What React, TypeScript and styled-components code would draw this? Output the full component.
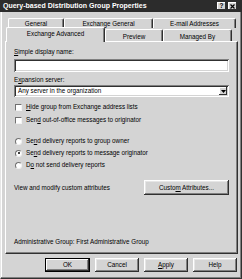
import React from 'react';
import styled, { createGlobalStyle, css } from 'styled-components';

const FACE = '#d4d4d4';

const Global = createGlobalStyle`
  html, body { margin: 0; padding: 0; background: ${FACE}; }
  body { font-family: "Liberation Sans", Arial, sans-serif; }
  * { box-sizing: border-box; }
`;

const raised = css`
  box-shadow: inset -1px -1px 0 #303030, inset 1px 1px 0 #ffffff,
    inset -2px -2px 0 #808080, inset 2px 2px 0 #e6e6e6;
`;
const sunken = css`
  box-shadow: inset 1px 1px 0 #808080, inset -1px -1px 0 #ffffff,
    inset 2px 2px 0 #303030, inset -2px -2px 0 ${FACE};
`;

const Window = styled.div`
  width: 242px;
  height: 279px;
  background: ${FACE};
  border-left: 1px solid #e6e6e6;
  border-right: 1px solid #303030;
  border-bottom: 1px solid #303030;
  box-shadow: inset -1px -1px 0 #808080, inset 1px 0 0 #ffffff;
  display: flex;
  flex-direction: column;
  font-size: 6.3px;
  line-height: 8px;
  color: #000;
`;

const TitleBar = styled.div`
  height: 12px;
  margin-left: -1px;
  margin-right: -1px;
  background: #2c2c2c;
  display: flex;
  align-items: center;
  padding: 0 5px 0 3px;
  color: #fff;
  font-weight: bold;
  font-size: 7px;
`;

const TitleText = styled.span`
  flex: 1;
  white-space: nowrap;
`;

const CaptionButtons = styled.div`
  display: flex;
  gap: 2px;
`;

const CaptionButton = styled.div`
  width: 9px;
  height: 8px;
  background: ${FACE};
  ${raised};
  box-shadow: inset -1px -1px 0 #303030, inset 1px 1px 0 #ffffff;
  color: #000;
  display: flex;
  align-items: center;
  justify-content: center;
  font-size: 6.5px;
  line-height: 8px;
  font-weight: bold;
`;

const Body = styled.div`
  flex: 1;
  display: flex;
  flex-direction: column;
  padding: 6px 3px 0 4px;
`;

const TabRow = styled.div<{ $indent: number; $front?: boolean }>`
  display: flex;
  padding-left: ${(p) => p.$indent}px;
  height: ${(p) => (p.$front ? 13 : 10)}px;
  position: relative;
  z-index: ${(p) => (p.$front ? 2 : 1)};
`;

const Tab = styled.div<{ $w: number; $selected?: boolean; $front?: boolean }>`
  width: ${(p) => p.$w}px;
  flex: none;
  background: ${FACE};
  border-top: 1px solid #ffffff;
  border-left: 1px solid #ffffff;
  border-right: 1px solid #303030;
  box-shadow: inset -1px 0 0 #808080;
  border-radius: 2px 2px 0 0;
  display: flex;
  justify-content: center;
  padding-top: ${(p) => (p.$front ? 3 : 1)}px;
  white-space: nowrap;
  ${(p) =>
    p.$front &&
    !p.$selected &&
    css`
      margin-top: 1px;
    `}
  ${(p) =>
    p.$selected &&
    css`
      margin-top: -1px;
      margin-bottom: -1px;
      padding-top: 2px;
      height: 15px;
      position: relative;
      z-index: 3;
    `}
`;

const Panel = styled.div`
  height: 213px;
  background: ${FACE};
  border-top: 1px solid #ffffff;
  border-left: 1px solid #ffffff;
  border-right: 1px solid #303030;
  border-bottom: 1px solid #303030;
  box-shadow: inset -1px -1px 0 #808080;
  display: flex;
  flex-direction: column;
  padding: 6px 8px 7px 8px;
  position: relative;
  z-index: 1;
`;

const Label = styled.div<{ $mt?: number }>`
  margin-top: ${(p) => p.$mt ?? 0}px;
  height: 8px;
  white-space: nowrap;
`;

const U = styled.span`
  text-decoration: underline;
  text-underline-offset: 1px;
`;

const TextInput = styled.div`
  margin-top: 3px;
  height: 13px;
  background: #fff;
  ${sunken};
`;

const Combo = styled.div`
  margin-top: 1px;
  height: 12px;
  background: #fff;
  ${sunken};
  display: flex;
  align-items: center;
  padding: 2px 2px 2px 4px;
`;

const ComboText = styled.span`
  flex: 1;
  white-space: nowrap;
`;

const DropButton = styled.div`
  width: 8px;
  height: 8px;
  background: ${FACE};
  ${raised};
  box-shadow: inset -1px -1px 0 #303030, inset 1px 1px 0 #ffffff;
  display: flex;
  align-items: center;
  justify-content: center;
`;

const OptionRow = styled.div<{ $mt: number }>`
  margin-top: ${(p) => p.$mt}px;
  height: 8px;
  display: flex;
  align-items: center;
  gap: 4px;
  padding-left: 1px;
  white-space: nowrap;
`;

const CheckBox = styled.div`
  width: 7px;
  height: 7px;
  flex: none;
  background: #fff;
  border-top: 1px solid #707070;
  border-left: 1px solid #707070;
  border-right: 1px solid #f4f4f4;
  border-bottom: 1px solid #f4f4f4;
`;

const Radio = styled.div<{ $on?: boolean }>`
  width: 7px;
  height: 7px;
  flex: none;
  border-radius: 50%;
  background: #fff;
  border: 1px solid;
  border-color: #707070 #f0f0f0 #f0f0f0 #707070;
  display: flex;
  align-items: center;
  justify-content: center;
  &::after {
    content: '';
    width: 2px;
    height: 2px;
    border-radius: 50%;
    background: ${(p) => (p.$on ? '#000' : 'transparent')};
  }
`;

const AttrRow = styled.div`
  margin-top: 11px;
  display: flex;
  align-items: center;
  justify-content: space-between;
  white-space: nowrap;
`;

const Button = styled.div<{ $w: number; $h: number; $default?: boolean }>`
  width: ${(p) => p.$w}px;
  height: ${(p) => p.$h}px;
  flex: none;
  background: ${FACE};
  ${raised};
  display: flex;
  align-items: center;
  justify-content: center;
  white-space: nowrap;
  ${(p) =>
    p.$default &&
    css`
      outline: 1px solid #000;
      outline-offset: -1px;
      box-shadow: inset -2px -2px 0 #303030, inset 2px 2px 0 #ffffff,
        inset -3px -3px 0 #808080;
    `}
`;

const Footer = styled.div`
  margin-top: auto;
  height: 8px;
  white-space: nowrap;
`;

const ButtonBar = styled.div`
  margin-top: 4px;
  display: flex;
  justify-content: flex-end;
  gap: 5px;
  padding-right: 1px;
`;

export default function App() {
  return (
    <>
      <Global />
      <Window>
        <TitleBar>
          <TitleText>Query-based Distribution Group Properties</TitleText>
          <CaptionButtons>
            <CaptionButton>?</CaptionButton>
            <CaptionButton>
              <svg width="5" height="5" viewBox="0 0 5 5">
                <path d="M0.5 0.5 L4.5 4.5 M4.5 0.5 L0.5 4.5" stroke="#000" strokeWidth="1.2" />
              </svg>
            </CaptionButton>
          </CaptionButtons>
        </TitleBar>
        <Body>
          <TabRow $indent={3}>
            <Tab $w={56}>General</Tab>
            <Tab $w={89}>Exchange General</Tab>
            <Tab $w={83}>E-mail Addresses</Tab>
          </TabRow>
          <TabRow $indent={1} $front>
            <Tab $w={99} $front $selected>
              Exchange Advanced
            </Tab>
            <Tab $w={58} $front>
              Preview
            </Tab>
            <Tab $w={69} $front>
              Managed By
            </Tab>
          </TabRow>
          <Panel>
            <Label>
              <U>S</U>imple display name:
            </Label>
            <TextInput />
            <Label $mt={4}>
              E<U>x</U>pansion server:
            </Label>
            <Combo>
              <ComboText>Any server in the organization</ComboText>
              <DropButton>
                <svg width="5" height="3" viewBox="0 0 5 3">
                  <path d="M0 0 H5 L2.5 3 Z" fill="#000" />
                </svg>
              </DropButton>
            </Combo>
            <OptionRow $mt={6}>
              <CheckBox />
              <span>
                <U>H</U>ide group from Exchange address lists
              </span>
            </OptionRow>
            <OptionRow $mt={5}>
              <CheckBox />
              <span>
                Sen<U>d</U> out-of-office messages to originator
              </span>
            </OptionRow>
            <OptionRow $mt={13}>
              <Radio />
              <span>
                Se<U>n</U>d delivery reports to group owner
              </span>
            </OptionRow>
            <OptionRow $mt={4}>
              <Radio $on />
              <span>
                Se<U>n</U>d delivery reports to message originator
              </span>
            </OptionRow>
            <OptionRow $mt={4}>
              <Radio />
              <span>
                D<U>o</U> not send delivery reports
              </span>
            </OptionRow>
            <AttrRow>
              <span>View and modify custom attributes</span>
              <Button $w={85} $h={15}>
                <span>
                  Custo<U>m</U> Attributes...
                </span>
              </Button>
            </AttrRow>
            <Footer>Administrative Group: First Administrative Group</Footer>
          </Panel>
          <ButtonBar>
            <Button $w={45} $h={14} $default>
              OK
            </Button>
            <Button $w={44} $h={14}>
              Cancel
            </Button>
            <Button $w={44} $h={14}>
              <span>
                <U>A</U>pply
              </span>
            </Button>
            <Button $w={44} $h={14}>
              Help
            </Button>
          </ButtonBar>
        </Body>
      </Window>
    </>
  );
}
